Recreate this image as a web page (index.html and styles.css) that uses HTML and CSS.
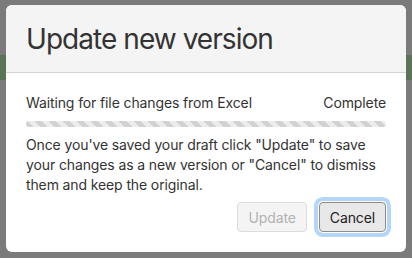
FILE: index.html
```html
<!DOCTYPE html>
<html>
<head>
<meta charset="utf-8">
<link rel="stylesheet" href="styles.css">
</head>
<body>
<div class="backdrop">
  <div class="band"></div>
</div>
<div class="modal">
  <div class="modal-header">
    <h1 class="title">Update new version</h1>
  </div>
  <div class="modal-body">
    <div class="status-row">
      <span>Waiting for file changes from Excel</span>
      <span>Complete</span>
    </div>
    <div class="progress"></div>
    <p class="message">Once you've saved your draft click "Update" to save your changes as a new version or "Cancel" to dismiss them and keep the original.</p>
    <div class="actions">
      <button class="btn btn-disabled" disabled>Update</button>
      <button class="btn btn-focus">Cancel</button>
    </div>
  </div>
</div>
</body>
</html>
```

FILE: styles.css
```css
html, body {
  margin: 0;
  padding: 0;
  width: 412px;
  height: 258px;
  overflow: hidden;
  background: #7b7b7b;
  font-family: Inter, "Liberation Sans", sans-serif;
  color: #333333;
}

.backdrop {
  height: 258px;
  padding-top: 55px;
  box-sizing: border-box;
}

.band {
  height: 25px;
  background: #5c7456;
}

.modal {
  position: absolute;
  left: 6px;
  top: 5px;
  width: 400px;
  height: 247px;
  background: #ffffff;
  border-radius: 6px;
  overflow: hidden;
  display: flex;
  flex-direction: column;
}

.modal-header {
  height: 67px;
  background: #f4f4f4;
  border-bottom: 1px solid #d4d4d4;
  display: flex;
  align-items: center;
  padding: 0 20px;
}

.title {
  margin: 0;
  font-size: 28px;
  font-weight: 400;
  letter-spacing: -0.95px;
  color: #333333;
  line-height: 34px;
  padding-top: 1px;
}

.modal-body {
  padding: 20px 20px 0 20px;
  font-size: 14px;
  line-height: 20px;
  letter-spacing: -0.12px;
  display: flex;
  flex-direction: column;
}

.status-row {
  display: flex;
  justify-content: space-between;
}

.progress {
  margin-top: 8px;
  height: 6px;
  border-radius: 3px;
  background: repeating-linear-gradient(45deg, #d2d2d2 0 5px, #ececec 5px 10px);
}

.message {
  margin: 8px 0 0 0;
}

.actions {
  margin-top: 7px;
  display: flex;
  justify-content: flex-end;
  gap: 12px;
}

.btn {
  height: 30px;
  padding: 0 10px;
  font-family: Inter, "Liberation Sans", sans-serif;
  font-size: 14px;
  letter-spacing: -0.12px;
  border-radius: 4px;
  margin: 0;
}

.btn-disabled {
  background: #f4f4f4;
  border: 1px solid #dcdcdc;
  color: #b2b2b2;
}

.btn-focus {
  background: #e8e8e8;
  border: 1px solid #8c8c8c;
  color: #222222;
  box-shadow: 0 0 0 1px #ffffff, 0 0 0 5px #b3d6f9;
}
```
